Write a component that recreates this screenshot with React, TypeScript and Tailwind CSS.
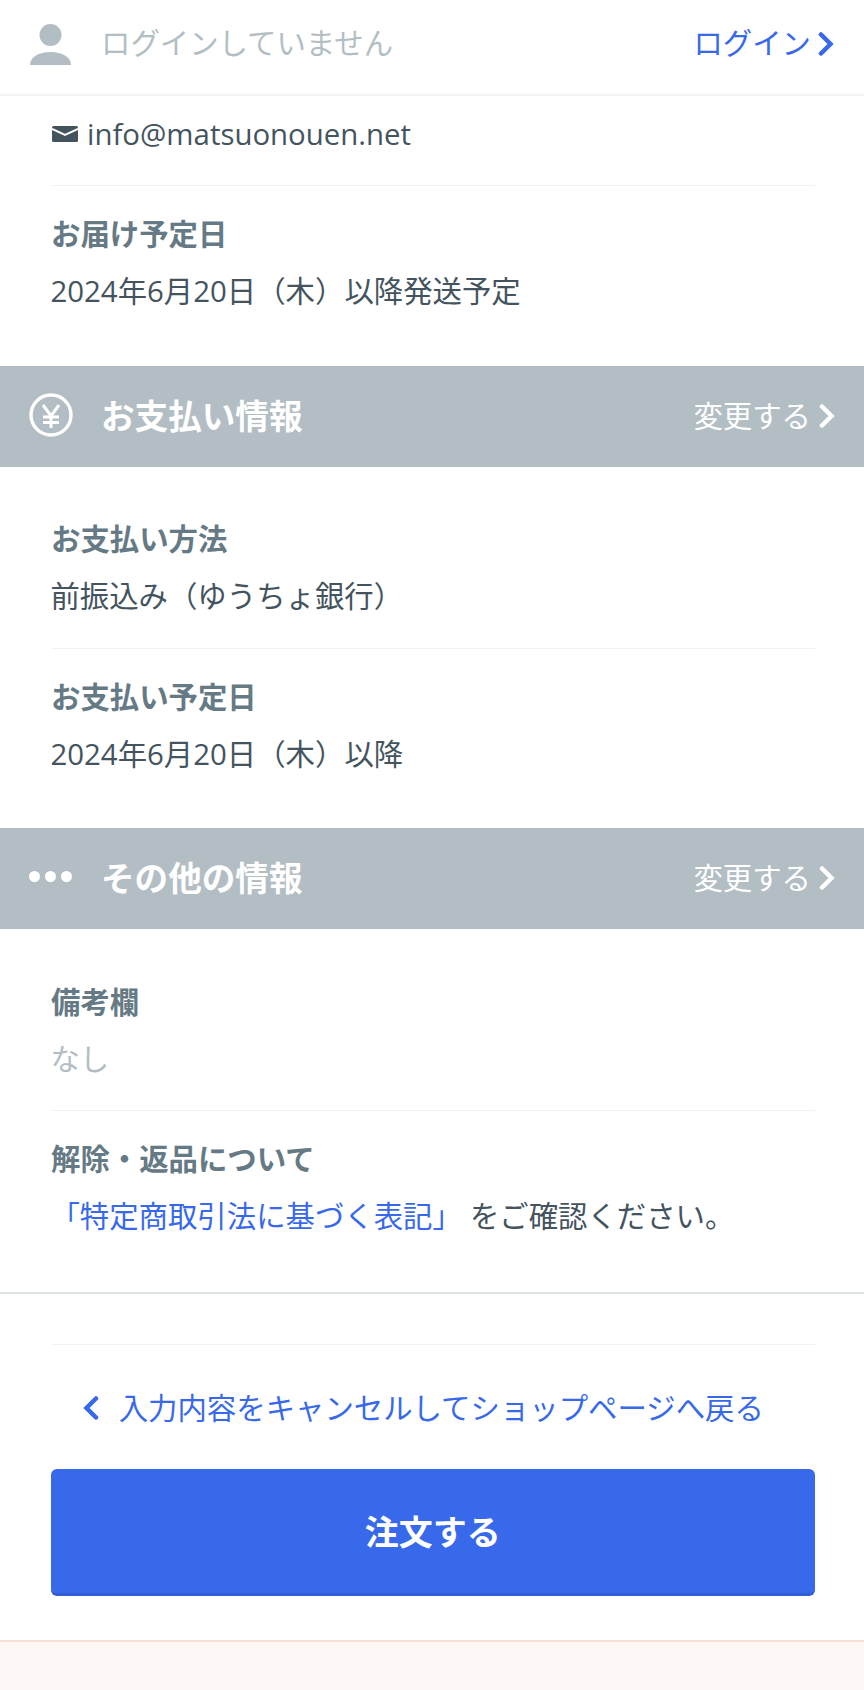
const font = "[font-family:'Open_Sans','Noto_Sans_CJK_JP',sans-serif]";

function Chevron({ className }: { className?: string }) {
  return (
    <svg viewBox="0 0 16 24" className={className} fill="none" stroke="currentColor" strokeWidth="4.5" strokeLinecap="round" strokeLinejoin="miter">
      <path d="M3 2.5L12.5 12 3 21.5" />
    </svg>
  );
}

function SectionHeader({ icon, title }: { icon: React.ReactNode; title: string }) {
  return (
    <div className="flex h-[100.8px] items-center justify-between bg-[#b3bec4] pl-[29px] pr-[29px] text-white">
      <div className="flex items-center">
        <div className="flex w-[72px] items-center">{icon}</div>
        <h2 className="text-[33.6px] font-bold">{title}</h2>
      </div>
      <a className="flex items-center text-[29.4px]">
        変更する
        <Chevron className="ml-[8px] h-[24px] w-[16px]" />
      </a>
    </div>
  );
}

function Label({ children }: { children: React.ReactNode }) {
  return <div className="mb-[7px] h-[50px] text-[29.4px] leading-[48px] font-bold text-[#667a85]">{children}</div>;
}

function Value({ className = "text-[#44545e]", children }: { className?: string; children: React.ReactNode }) {
  return <div className={`-ml-[0.6px] h-[50px] text-[29.4px] leading-[48px] ${className}`}>{children}</div>;
}

export default function App() {
  return (
    <div className={`${font} h-[1690px] overflow-hidden bg-white`}>
      <header className="flex h-[96px] items-center justify-between border-b-2 border-[#f1f3f4] pb-[5px] pl-[30px] pr-[30px]">
        <div className="flex items-center">
          <svg viewBox="0 0 41 41" className="mt-[1px] h-[41px] w-[41px] text-[#b3bec4]" fill="currentColor">
            <circle cx="20.5" cy="11" r="11" />
            <path d="M0 41c0-8 9-13 20.5-13S41 33 41 41z" />
          </svg>
          <span className="ml-[30px] pb-[3px] text-[29.4px] text-[#b3bec4]">ログインしていません</span>
        </div>
        <a className="flex items-center text-[29.4px] text-[#3869ea]">
          <span className="pb-[3px]">ログイン</span>
          <Chevron className="ml-[7px] h-[24px] w-[16px]" />
        </a>
      </header>

      <main className="pl-[51px] pr-[49.5px]">
        <div className="flex h-[90px] items-start border-b border-[#f0f2f3] pt-[13px] text-[#44545e]">
          <div className="flex h-[50px] items-center">
            <svg viewBox="0 0 26 16" className="mr-[9px] ml-[1px] h-[16px] w-[26px]">
              <rect width="26" height="16" rx="1.5" fill="currentColor" />
              <path d="M0 3l13 6 13-6" fill="none" stroke="#fff" strokeWidth="2" />
            </svg>
            <span className="text-[29.4px]">info@matsuonouen.net</span>
          </div>
        </div>
        <div className="pt-[24px] pb-[49px]">
          <Label>お届け予定日</Label>
          <Value>2024年6月20日（木）以降発送予定</Value>
        </div>
      </main>

      <SectionHeader
        title="お支払い情報"
        icon={
          <svg viewBox="0 0 44 44" className="mb-[3px] h-[44px] w-[44px]" fill="none" stroke="currentColor">
            <circle cx="22" cy="22" r="20" strokeWidth="3.4" />
            <path d="M14 12l8 11 8-11M22 23v12M14 24h16M14 29.5h16" strokeWidth="3" />
          </svg>
        }
      />
      <div className="pl-[51px] pr-[49.5px]">
        <div className="border-b border-[#f0f2f3] pt-[48px] pb-[26px]">
          <Label>お支払い方法</Label>
          <Value>前振込み（ゆうちょ銀行）</Value>
        </div>
        <div className="pt-[24px] pb-[48px]">
          <Label>お支払い予定日</Label>
          <Value>2024年6月20日（木）以降</Value>
        </div>
      </div>

      <SectionHeader
        title="その他の情報"
        icon={
          <div className="mb-[4px] flex gap-[5px]">
            <span className="h-[11px] w-[11px] rounded-full bg-white" />
            <span className="h-[11px] w-[11px] rounded-full bg-white" />
            <span className="h-[11px] w-[11px] rounded-full bg-white" />
          </div>
        }
      />
      <div className="pl-[51px] pr-[49.5px]">
        <div className="border-b border-[#f0f2f3] pt-[49px] pb-[25px]">
          <Label>備考欄</Label>
          <Value className="text-[#b3bec4]">なし</Value>
        </div>
        <div className="pt-[24px] pb-[50px]">
          <Label>解除・返品について</Label>
          <Value>
            <a className="text-[#3869ea]">「特定商取引法に基づく表記」</a>
            <span className="ml-[8px]">をご確認ください。</span>
          </Value>
        </div>
      </div>

      <div className="border-t-2 border-[#dfe4e6] pl-[51px] pr-[49.5px] pt-[50px]">
        <div className="border-t border-[#f0f2f3] pt-[38px]">
          <a className="flex h-[50px] items-center justify-center pr-[19px] text-[29.4px] text-[#3869ea]">
            <Chevron className="mr-[20px] h-[24px] w-[16px] rotate-180" />
            入力内容をキャンセルしてショップページへ戻る
          </a>
          <button className="mt-[36px] flex h-[127px] w-full items-center justify-center rounded-[6px] border-b-[3px] border-[#315fd6] bg-[#3869ea] pt-[3px] text-[34px] font-bold text-white">
            注文する
          </button>
        </div>
      </div>

      <footer className="mt-[44px] h-[60px] border-t-2 border-[#f5e0d8] bg-[#fdf8f5]" />
    </div>
  );
}
